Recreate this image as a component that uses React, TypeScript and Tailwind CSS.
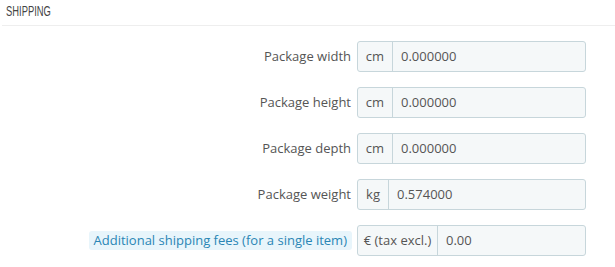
const rows = [
  { label: 'Package width', unit: 'cm', value: '0.000000', unitW: 'w-[35px]' },
  { label: 'Package height', unit: 'cm', value: '0.000000', unitW: 'w-[35px]' },
  { label: 'Package depth', unit: 'cm', value: '0.000000', unitW: 'w-[35px]' },
  { label: 'Package weight', unit: 'kg', value: '0.574000', unitW: 'w-[31px]' },
]

function Field({ unit, value, unitW }: { unit: string; value: string; unitW: string }) {
  return (
    <div className="flex h-[31px] w-[229px] rounded-[3px] border border-[#c7d6db] bg-[#f5f8f9] text-[13px] text-[#555]">
      <span className={`flex items-center justify-center border-r border-[#c7d6db] ${unitW}`}>{unit}</span>
      <span className="flex items-center pl-2">{value}</span>
    </div>
  )
}

export default function App() {
  return (
    <div className="w-[615px] h-[267px] bg-white font-['Open_Sans',sans-serif] overflow-hidden">
      <div className="ml-[2px] h-[26px] border-b border-[#eeeeee] pl-1 pt-[1px]">
        <h3 className="w-max origin-left scale-x-[0.67] font-['Liberation_Sans',sans-serif] text-[14px] leading-[20px] text-[#444] uppercase">
          Shipping
        </h3>
      </div>

      <div className="flex flex-col gap-[15px] pt-[15px] pl-[357px]">
        {rows.map((r) => (
          <div key={r.label} className="relative flex items-center">
            <span className="absolute right-full mr-[6px] whitespace-nowrap text-[13px] text-[#555]">
              {r.label}
            </span>
            <Field unit={r.unit} value={r.value} unitW={r.unitW} />
          </div>
        ))}
        <div className="relative flex items-center">
          <span className="absolute right-full mr-[5px] whitespace-nowrap rounded-[3px] bg-[#e8f5fb] px-[5px] text-[13px] leading-[19px] text-[#2a86b5]">
            Additional shipping fees (for a single item)
          </span>
          <Field unit="€ (tax excl.)" value="0.00" unitW="w-[80px]" />
        </div>
      </div>
    </div>
  )
}
